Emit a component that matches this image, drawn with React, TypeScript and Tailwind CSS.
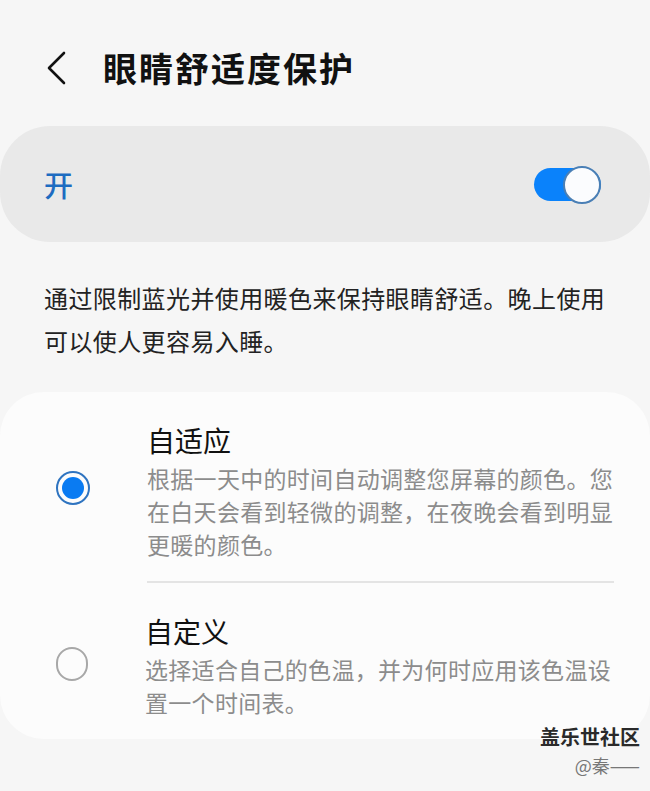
import React from "react";

const font = { fontFamily: '"Noto Sans CJK SC", "Noto Sans", sans-serif' };

type Option = { title: string; desc: string; selected: boolean };

const options: Option[] = [
  {
    title: "自适应",
    desc: "根据一天中的时间自动调整您屏幕的颜色。您在白天会看到轻微的调整，在夜晚会看到明显更暖的颜色。",
    selected: true,
  },
  {
    title: "自定义",
    desc: "选择适合自己的色温，并为何时应用该色温设置一个时间表。",
    selected: false,
  },
];

function Radio({ on }: { on: boolean }) {
  if (on) {
    return (
      <div className="w-[34px] h-[34px] -mt-[8px] rounded-full border-[2px] border-[#2f74c0] flex items-center justify-center shrink-0">
        <div className="w-[22px] h-[22px] rounded-full bg-[#0a7bf2]" />
      </div>
    );
  }
  return <div className="w-[32px] h-[34px] -mt-[4px] rounded-full border-[2px] border-[#a8a8a8] shrink-0" />;
}

export default function App() {
  return (
    <div className="relative w-[650px] h-[791px] bg-[#f6f6f6] overflow-hidden" style={font}>
      {/* header */}
      <div className="flex items-center pt-[48px] h-[88px]">
        <svg className="ml-[45px]" width="22" height="34" viewBox="0 0 22 34" fill="none">
          <path d="M19 2 L4 17 L19 32" stroke="#111" strokeWidth="2.6" strokeLinecap="round" strokeLinejoin="round" />
        </svg>
        <h1 className="ml-[36px] text-[34px] leading-[40px] font-bold text-[#111] tracking-[2px]">眼睛舒适度保护</h1>
      </div>

      {/* master switch */}
      <div className="mt-[38px] h-[116px] rounded-[50px] bg-[#e9e9e9] flex items-center justify-between pl-[44px] pr-[49px]">
        <span className="text-[29px] leading-none font-medium text-[#1d6cc1]">开</span>
        <div className="relative w-[67px] h-[33px]">
          <div className="absolute inset-0 rounded-full bg-[#0a82fb]" />
          <div className="absolute right-0 top-[-2px] w-[38px] h-[38px] rounded-full bg-[#fbfcfe] border-[2px] border-[#4a7fb5]" />
        </div>
      </div>

      {/* description */}
      <p className="mt-[34px] pl-[44px] pr-[28px] text-[24px] leading-[43px] tracking-[0.4px] text-[#222]">
        通过限制蓝光并使用暖色来保持眼睛舒适。晚上使用可以使人更容易入睡。
      </p>

      {/* options */}
      <div className="mt-[30px] rounded-[44px] bg-[#fcfcfc] pt-[30px] pb-[20px]">
        {options.map((o, i) => (
          <div key={o.title}>
            {i > 0 && <div className="ml-[147px] w-[467px] h-[2px] bg-[#e4e4e4] mt-[20px] mb-[30px]" />}
            <div className="flex items-center pl-[56px]">
              <Radio on={o.selected} />
              <div className="ml-[57px] w-[472px]">
                <div className="text-[28px] leading-[36px] text-[#111]">{o.title}</div>
                <p className="mt-[4px] text-[23px] leading-[33px] tracking-[0.3px] text-[#8c8c8c]">{o.desc}</p>
              </div>
            </div>
          </div>
        ))}
      </div>

      {/* watermark */}
      <div className="absolute right-[10px] top-[724px] flex flex-col items-end">
        <span className="text-[20px] leading-[26px] font-bold text-[#2a2a2a]">盖乐世社区</span>
        <span className="text-[18px] leading-[22px] text-[#777] mt-[4px]">@秦——</span>
      </div>
    </div>
  );
}
